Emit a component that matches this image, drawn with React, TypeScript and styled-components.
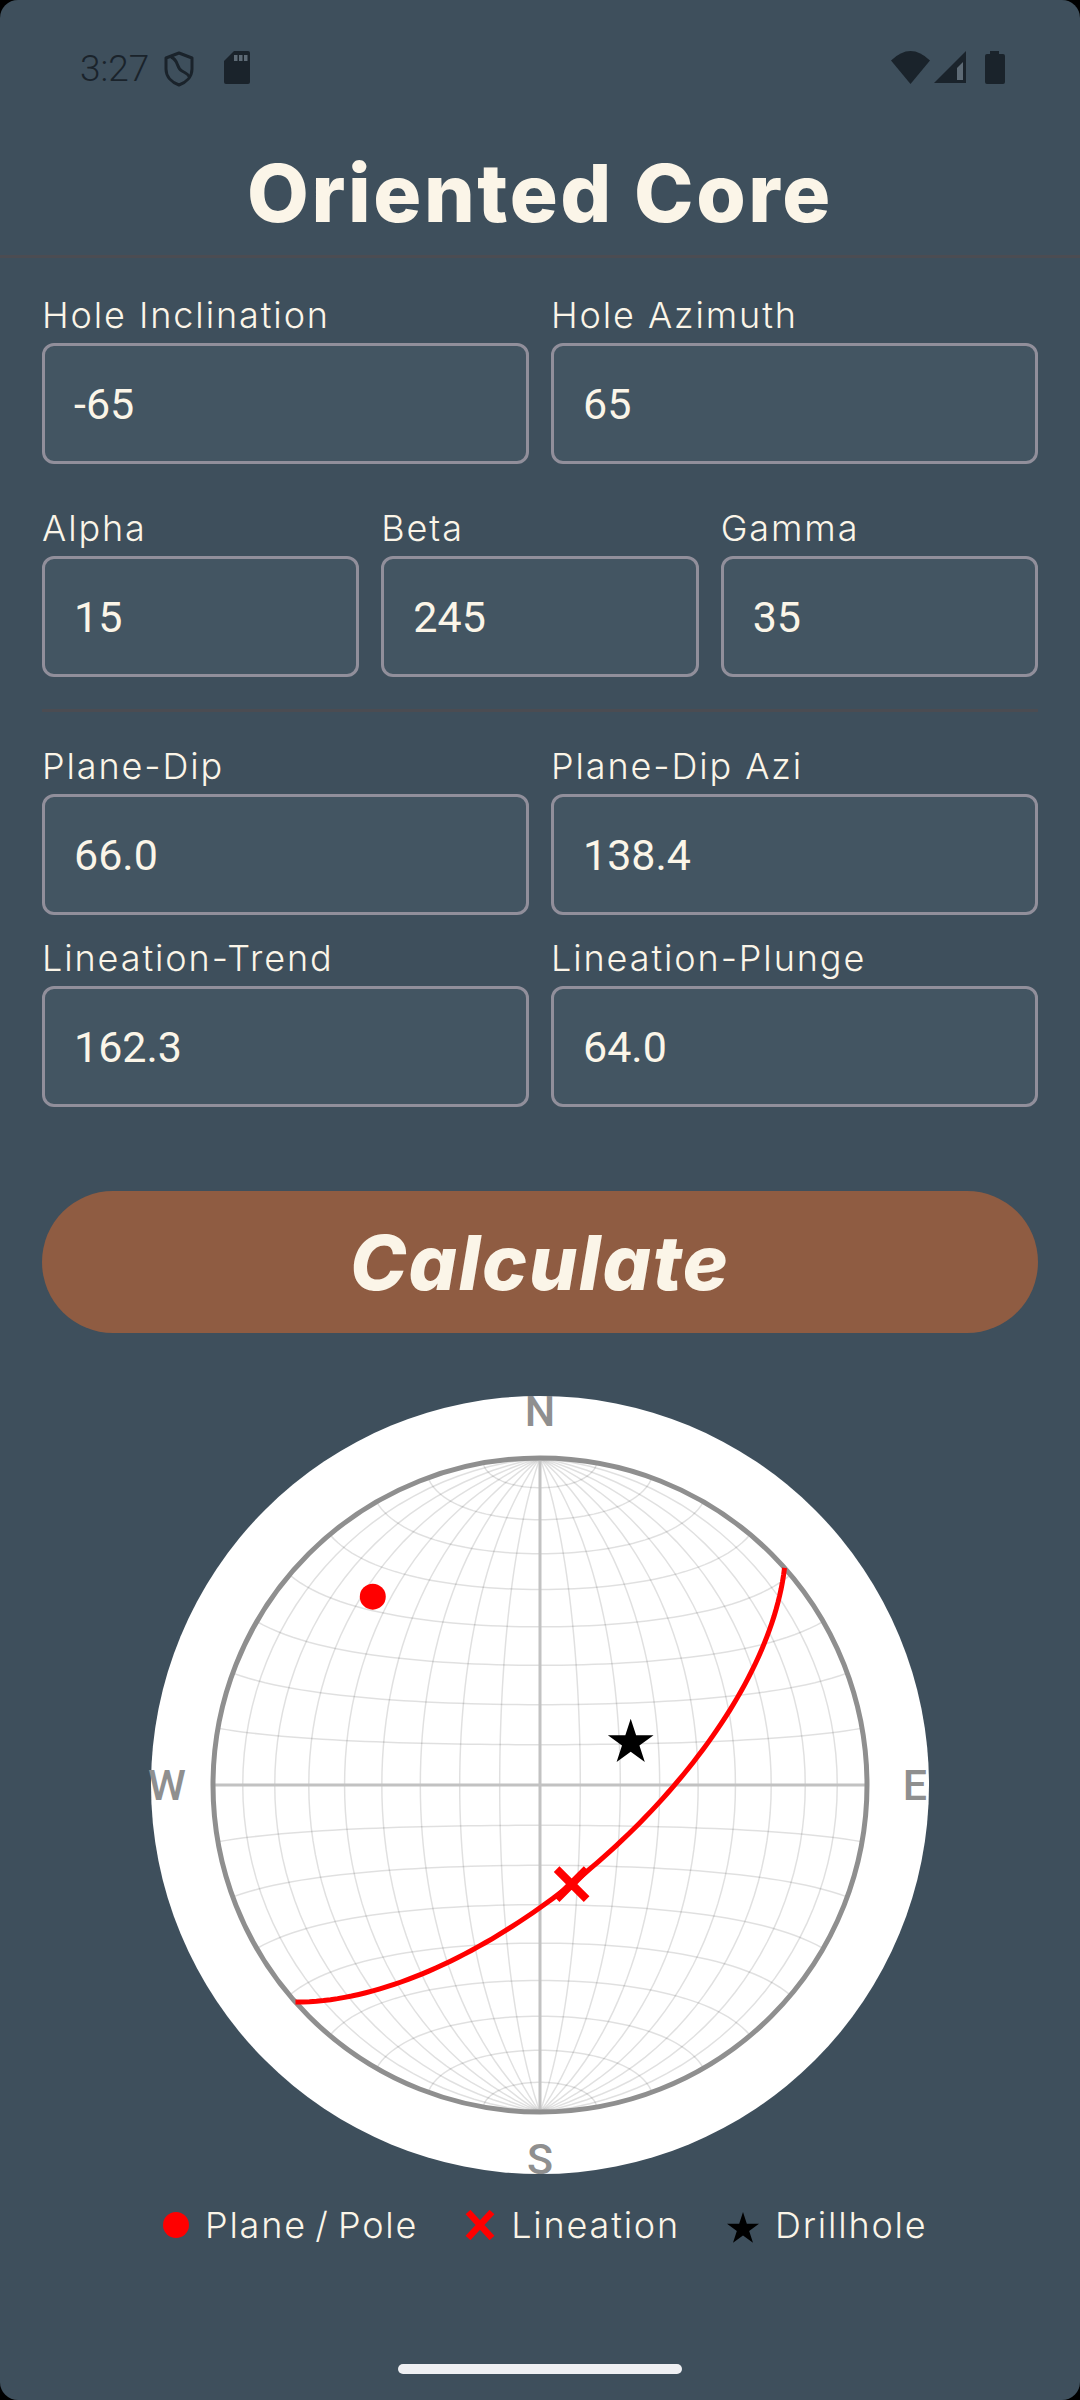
import React from "react";
import styled, { createGlobalStyle } from "styled-components";

const GlobalStyle = createGlobalStyle`
  html, body {
    margin: 0;
    padding: 0;
    background: #000;
  }
`;

const INK = "#1a232b";
const CREAM = "#fbf5e8";
const BG = "#3e4f5c";

const NET_RADIUS = 327;
const rad = (d: number) => (d * Math.PI) / 180;

// equal-area (Schmidt) projection of a lat/lon point
const lambert = (lat: number, lon: number) => {
  const k = Math.sqrt(1 / (1 + Math.cos(rad(lat)) * Math.cos(rad(lon))));
  return [
    NET_RADIUS * k * Math.cos(rad(lat)) * Math.sin(rad(lon)),
    -NET_RADIUS * k * Math.sin(rad(lat)),
  ];
};

// lower hemisphere projection of a trend/plunge line
const project = (trend: number, plunge: number) => {
  const r = NET_RADIUS * Math.SQRT2 * Math.sin(rad((90 - plunge) / 2));
  return [r * Math.sin(rad(trend)), -r * Math.cos(rad(trend))];
};

const toPath = (pts: number[][]) =>
  pts.map((p, i) => `${i ? "L" : "M"}${p[0].toFixed(2)} ${p[1].toFixed(2)}`).join("");

const range = (from: number, to: number, step: number) => {
  const out: number[] = [];
  for (let v = from; v <= to; v += step) out.push(v);
  return out;
};

const gridPaths = [
  ...range(-80, 80, 10)
    .filter((v) => v !== 0)
    .map((lat) => toPath(range(-90, 90, 3).map((lon) => lambert(lat, lon)))),
  ...range(-80, 80, 10)
    .filter((v) => v !== 0)
    .map((lon) => toPath(range(-90, 90, 3).map((lat) => lambert(lat, lon)))),
];

// great circle of the plane, walked from strike to strike through the dip line
const planePath = (dip: number, dipAzi: number) => {
  const pts = range(0, 180, 2).map((rake) => {
    const strike = dipAzi - 90;
    const n = Math.cos(rad(rake)) * Math.cos(rad(strike)) + Math.sin(rad(rake)) * Math.cos(rad(dip)) * Math.cos(rad(dipAzi));
    const e = Math.cos(rad(rake)) * Math.sin(rad(strike)) + Math.sin(rad(rake)) * Math.cos(rad(dip)) * Math.sin(rad(dipAzi));
    const d = Math.sin(rad(rake)) * Math.sin(rad(dip));
    const trend = (Math.atan2(e, n) * 180) / Math.PI;
    const plunge = (Math.asin(Math.min(1, d)) * 180) / Math.PI;
    return project(trend, plunge);
  });
  return toPath(pts);
};

const starPoints = (cx: number, cy: number, R: number) =>
  range(0, 9, 1)
    .map((i) => {
      const r = i % 2 ? R * 0.382 : R;
      const a = rad(i * 36);
      return `${(cx + r * Math.sin(a)).toFixed(2)},${(cy - r * Math.cos(a)).toFixed(2)}`;
    })
    .join(" ");

const pole = project(318.4, 24);
const lineation = project(162.3, 64);
const drillhole = project(65, 65);

const Stereonet: React.FC = () => (
  <NetSvg viewBox="-389 -389 778 778">
    <circle cx={0} cy={0} r={389} fill="#fff" />
    {gridPaths.map((d, i) => (
      <GridLine key={i} d={d} />
    ))}
    <AxisLine x1={0} y1={-NET_RADIUS} x2={0} y2={NET_RADIUS} />
    <AxisLine x1={-NET_RADIUS} y1={0} x2={NET_RADIUS} y2={0} />
    <circle cx={0} cy={0} r={NET_RADIUS} fill="none" stroke="#8f8f8f" strokeWidth={5} />
    <Compass x={0} y={-359}>N</Compass>
    <Compass x={0} y={389}>S</Compass>
    <Compass x={375} y={15}>E</Compass>
    <Compass x={-373} y={15}>W</Compass>
    <path d={planePath(66, 138.4)} fill="none" stroke="#f00" strokeWidth={5} />
    <circle cx={pole[0]} cy={pole[1]} r={13} fill="#f00" />
    <g transform={`translate(${lineation[0]} ${lineation[1]})`}>
      <path d="M-15 -15L15 15M-15 15L15 -15" stroke="#f00" strokeWidth={8} />
    </g>
    <polygon points={starPoints(drillhole[0], drillhole[1], 24)} fill="#000" />
  </NetSvg>
);

const Field: React.FC<{ label: string; value: string }> = ({ label, value }) => (
  <FieldWrap>
    <FieldLabel>{label}</FieldLabel>
    <FieldBox>{value}</FieldBox>
  </FieldWrap>
);

const App: React.FC = () => (
  <>
    <GlobalStyle />
    <Page>
      <StatusBar>
        <StatusLeft>
          <Clock>3:27</Clock>
          <svg width="30" height="36" viewBox="0 0 30 36">
            <path d="M15 2L28 7V18C28 26 22 31.500 15 34C8 31.500 2 26 2 18V7Z" fill="none" stroke={INK} strokeWidth="3" strokeLinejoin="round" />
            <path d="M7 6C15 9 12 17 18 20C22 22 25 24 25 26" fill="none" stroke={INK} strokeWidth="3" />
          </svg>
          <SdIcon width="26" height="33" viewBox="0 0 26 33">
            <path d="M10 0H24a2 2 0 0 1 2 2V31a2 2 0 0 1-2 2H2a2 2 0 0 1-2-2V10Z" fill={INK} />
            <path d="M10 4h3.500v6H10zM15 4h3.500v6H15zM20 4h3.500v6H20z" fill="#5d6a75" />
          </SdIcon>
        </StatusLeft>
        <StatusRight>
          <svg width="39" height="33" viewBox="0 0 39 33">
            <path d="M0 9.500Q19.500 -9.500 39 9.500L19.500 33Z" fill={INK} />
          </svg>
          <svg width="32" height="32" viewBox="0 0 32 32">
            <path d="M0 32L32 0V32Z" fill={INK} />
            <path d="M23 17L29 11V29H23Z" fill="#5d6a75" />
          </svg>
          <BatteryIcon width="20" height="33" viewBox="0 0 20 33">
            <path d="M5 0H14V3H18a2 2 0 0 1 2 2V31a2 2 0 0 1-2 2H2a2 2 0 0 1-2-2V5a2 2 0 0 1 2-2H5Z" fill={INK} />
          </BatteryIcon>
        </StatusRight>
      </StatusBar>

      <Header>
        <Title>Oriented Core</Title>
      </Header>

      <Form>
        <TwoCol>
          <Field label="Hole Inclination" value="-65" />
          <Field label="Hole Azimuth" value="65" />
        </TwoCol>
        <ThreeCol>
          <Field label="Alpha" value="15" />
          <Field label="Beta" value="245" />
          <Field label="Gamma" value="35" />
        </ThreeCol>
        <Divider />
        <ResultRows>
          <TwoCol>
            <Field label="Plane-Dip" value="66.0" />
            <Field label="Plane-Dip Azi" value="138.4" />
          </TwoCol>
          <TwoCol>
            <Field label="Lineation-Trend" value="162.3" />
            <Field label="Lineation-Plunge" value="64.0" />
          </TwoCol>
        </ResultRows>
        <CalcButton>Calculate</CalcButton>
      </Form>

      <NetWrap>
        <Stereonet />
      </NetWrap>

      <Legend>
        <LegendItem>
          <svg width="26" height="26" viewBox="0 0 26 26">
            <circle cx="13" cy="13" r="13" fill="#f00" />
          </svg>
          <LegendText>Plane / Pole</LegendText>
        </LegendItem>
        <LegendItem>
          <svg width="30" height="30" viewBox="0 0 30 30">
            <path d="M3 2L27 28M3 28L27 2" stroke="#f00" strokeWidth="6.500" />
          </svg>
          <LegendText>Lineation</LegendText>
        </LegendItem>
        <LegendItem>
          <StarIcon width="32" height="32" viewBox="0 0 32 32">
            <polygon points={starPoints(16, 17, 17)} fill="#000" />
          </StarIcon>
          <LegendText>Drillhole</LegendText>
        </LegendItem>
      </Legend>

      <HomeBar />
    </Page>
  </>
);

export default App;

const Page = styled.div`
  position: relative;
  width: 1080px;
  height: 2400px;
  background: ${BG};
  border-radius: 18px;
  overflow: hidden;
  display: flex;
  flex-direction: column;
`;

const StatusBar = styled.div`
  height: 135px;
  padding: 51px 75px 0 80px;
  box-sizing: border-box;
  display: flex;
  justify-content: space-between;
  align-items: flex-start;
`;

const StatusLeft = styled.div`
  display: flex;
  align-items: flex-start;
  gap: 15px;
`;

const Clock = styled.span`
  font-family: Roboto, sans-serif;
  font-weight: 300;
  font-size: 37px;
  line-height: 36px;
  color: ${INK};
`;

const SdIcon = styled.svg`
  margin-left: 15px;
`;

const StatusRight = styled.div`
  display: flex;
  align-items: flex-start;
  gap: 4px;
`;

const BatteryIcon = styled.svg`
  margin-left: 15px;
`;

const Header = styled.div`
  height: 123px;
  box-sizing: border-box;
  border-bottom: 3px solid #4b4c52;
  display: flex;
  justify-content: center;
  align-items: flex-start;
`;

const Title = styled.h1`
  margin: 12px 0 0;
  font-family: Inter, sans-serif;
  font-weight: 800;
  font-size: 80px;
  letter-spacing: 2.6px;
  line-height: 92px;
  color: ${CREAM};
`;

const Form = styled.div`
  padding: 37px 42px 0;
  display: flex;
  flex-direction: column;
`;

const TwoCol = styled.div`
  display: grid;
  grid-template-columns: 1fr 1fr;
  gap: 22px;
`;

const ThreeCol = styled.div`
  margin-top: 44px;
  display: grid;
  grid-template-columns: 1fr 1fr 1fr;
  gap: 22px;
`;

const Divider = styled.div`
  height: 3px;
  margin-top: 32px;
  background: #4b4c52;
`;

const ResultRows = styled.div`
  margin-top: 34px;
  display: flex;
  flex-direction: column;
  gap: 23px;
`;

const FieldWrap = styled.div`
  display: flex;
  flex-direction: column;
`;

const FieldLabel = styled.div`
  height: 48px;
  font-family: Inter, sans-serif;
  font-weight: 300;
  font-size: 36px;
  letter-spacing: 1.9px;
  line-height: 40px;
  white-space: nowrap;
  color: ${CREAM};
`;

const FieldBox = styled.div`
  height: 121px;
  box-sizing: border-box;
  padding-left: 29px;
  display: flex;
  align-items: center;
  border: 3px solid #918f9b;
  border-radius: 12px;
  background: #435562;
  font-family: Roboto, sans-serif;
  font-size: 43px;
  color: ${CREAM};
`;

const CalcButton = styled.div`
  margin-top: 84px;
  height: 142px;
  border-radius: 71px;
  background: #8f5c42;
  display: flex;
  align-items: center;
  justify-content: center;
  font-family: Inter, sans-serif;
  font-weight: 800;
  font-style: italic;
  font-size: 76px;
  letter-spacing: 1.8px;
  color: ${CREAM};
`;

const NetWrap = styled.div`
  margin-top: 63px;
  display: flex;
  justify-content: center;
`;

const NetSvg = styled.svg`
  width: 778px;
  height: 778px;
  overflow: visible;
`;

const GridLine = styled.path`
  fill: none;
  stroke: #000;
  stroke-opacity: 0.12;
  stroke-width: 1.5;
`;

const AxisLine = styled.line`
  stroke: #c2c2c2;
  stroke-width: 3;
`;

const Compass = styled.text`
  font-family: Roboto, sans-serif;
  font-weight: 500;
  font-size: 43px;
  fill: #8f8f8f;
  text-anchor: middle;
`;

const Legend = styled.div`
  margin-top: 29px;
  padding-left: 163px;
  display: flex;
  align-items: center;
  gap: 47px;
`;

const LegendItem = styled.div`
  display: flex;
  align-items: center;
  gap: 16px;
`;

const StarIcon = styled.svg`
  margin-top: 6px;
`;

const LegendText = styled.span`
  font-family: Inter, sans-serif;
  font-weight: 300;
  font-size: 36px;
  letter-spacing: 1.8px;
  word-spacing: -3.5px;
  line-height: 44px;
  color: ${CREAM};
`;

const HomeBar = styled.div`
  position: absolute;
  left: 398px;
  bottom: 26px;
  width: 284px;
  height: 10px;
  border-radius: 5px;
  background: #eff0f3;
`;
